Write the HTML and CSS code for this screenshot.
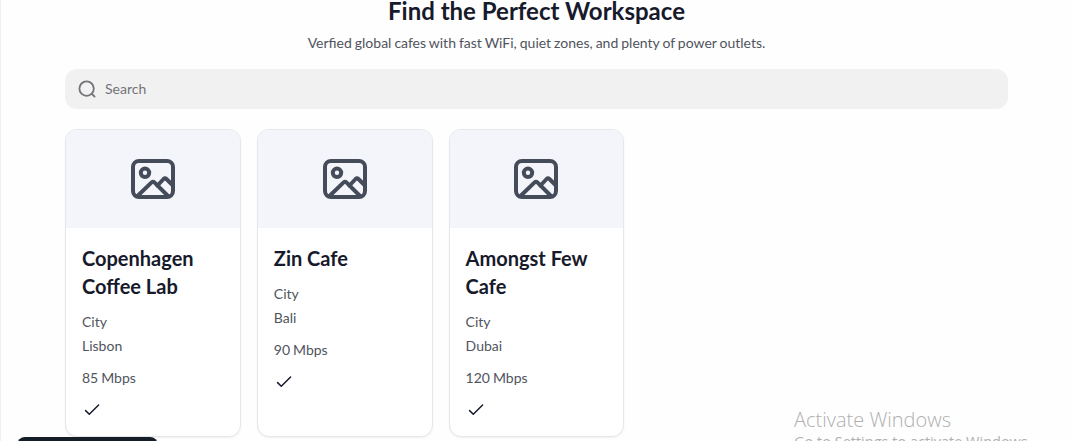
FILE: index.html
```
<!DOCTYPE html>
<html lang="en">

<head>
    <meta charset="UTF-8">
    <title>Find the Perfect Workspace</title>
    <link rel="stylesheet" href="styles.css">
</head>

<body>
    <svg class="sprite" width="0" height="0">
        <symbol id="image" viewBox="0 0 44 40">
            <rect x="2" y="2" width="40" height="36" rx="6" />
            <circle cx="14" cy="13.8" r="4.2" />
            <path d="M6.5 37 20.6 23.4Q22 22.2 23.4 23.4L37 37" />
            <path d="M26.5 26.5 32.6 20Q34 18.6 35.4 20L42 26.5" />
        </symbol>
        <symbol id="check" viewBox="0 0 20 20">
            <path d="M3.6 10.6 7.3 14.2 16.6 5" />
        </symbol>
    </svg>
    <main class="page">
        <h1 class="page-title">Find the Perfect Workspace</h1>
        <p class="page-subtitle">Verfied global cafes with fast WiFi, quiet zones, and plenty of power outlets.</p>
        <label class="search">
            <svg class="search-icon" viewBox="0 0 20 20">
                <circle cx="9.6" cy="9.6" r="7.2" />
                <path d="M15 15 17.6 17.6" />
            </svg>
            <input class="search-input" type="text" placeholder="Search">
        </label>
        <div class="cards">
            <article class="card">
                <div class="card-media">
                    <svg class="image-icon"><use href="#image" /></svg>
                </div>
                <div class="card-body">
                    <h2 class="card-title">Copenhagen Coffee Lab</h2>
                    <p class="card-text">City<br>Lisbon</p>
                    <p class="card-text">85 Mbps</p>
                    <svg class="check-icon"><use href="#check" /></svg>
                </div>
            </article>
            <article class="card">
                <div class="card-media">
                    <svg class="image-icon"><use href="#image" /></svg>
                </div>
                <div class="card-body">
                    <h2 class="card-title">Zin Cafe</h2>
                    <p class="card-text">City<br>Bali</p>
                    <p class="card-text">90 Mbps</p>
                    <svg class="check-icon"><use href="#check" /></svg>
                </div>
            </article>
            <article class="card">
                <div class="card-media">
                    <svg class="image-icon"><use href="#image" /></svg>
                </div>
                <div class="card-body">
                    <h2 class="card-title">Amongst Few Cafe</h2>
                    <p class="card-text">City<br>Dubai</p>
                    <p class="card-text">120 Mbps</p>
                    <svg class="check-icon"><use href="#check" /></svg>
                </div>
            </article>
        </div>
    </main>
    <div class="toast"></div>
    <div class="watermark">
        <div class="watermark-title">Activate Windows</div>
        <div class="watermark-text">Go to Settings to activate Windows.</div>
    </div>
</body>

</html>
```

FILE: styles.css
```
* {
    box-sizing: border-box;
}

body,
html {
    height: 100%;
    margin: 0;
    overflow: hidden;
}

body {
    font-family: Lato, sans-serif;
    background-color: #fefefe;
    color: #171a2b;
    border-left: 1px solid #f0f0f0;
}

h1,
h2,
p {
    margin: 0;
}

svg {
    display: block;
    fill: none;
    stroke: currentColor;
    stroke-linecap: round;
    stroke-linejoin: round;
}

.sprite {
    display: none;
}

.page {
    width: 943px;
    margin: -5px 0 0 64px;
}

.page-title {
    font-size: 24px;
    font-weight: 700;
    line-height: 32px;
    text-align: center;
}

.page-subtitle {
    margin-top: 4px;
    font-size: 14px;
    line-height: 24px;
    text-align: center;
    word-spacing: -0.6px;
    color: #50545d;
}

.search {
    display: flex;
    align-items: center;
    gap: 8px;
    height: 40px;
    margin-top: 14px;
    padding: 0 12px;
    border-radius: 12px;
    background-color: #f1f1f1;
    color: #737478;
}

.search-icon {
    width: 20px;
    height: 20px;
    stroke-width: 1.8;
}

.search-input {
    flex: 1;
    padding: 0;
    border: 0;
    outline: 0;
    background: none;
    font: 14px/20px Lato, sans-serif;
}

.search-input::placeholder {
    color: #737478;
}

.cards {
    display: grid;
    grid-template-columns: repeat(5, 1fr);
    gap: 16px;
    margin-top: 20px;
}

.card {
    min-height: 308px;
    border: 1px solid #e5e7eb;
    border-radius: 12px;
    overflow: hidden;
    background-color: #fff;
    box-shadow: 0 1px 2px rgba(0, 0, 0, 0.06);
}

.card-media {
    display: flex;
    align-items: center;
    justify-content: center;
    height: 98px;
    background-color: #f3f5fa;
    color: #444b59;
}

.image-icon {
    width: 44px;
    height: 40px;
    stroke-width: 4;
}

.card-body {
    display: flex;
    flex-direction: column;
    gap: 8px;
    padding: 16px;
}

.card-title {
    margin-bottom: 2px;
    font-size: 20px;
    font-weight: 700;
    line-height: 28px;
}

.card-text {
    font-size: 14px;
    line-height: 24px;
    word-spacing: -0.6px;
    color: #50545d;
}

.check-icon {
    width: 20px;
    height: 20px;
    margin-top: 2px;
    stroke-width: 1.5;
}

/* dark bar peeking in from the bottom edge */
.toast {
    position: absolute;
    left: 17px;
    top: 437px;
    width: 141px;
    height: 40px;
    border-radius: 8px;
    background-color: #151d27;
}

.watermark {
    position: absolute;
    left: 794px;
    top: 407px;
    font-family: "Open Sans", sans-serif;
    color: #b0b0b0;
    white-space: nowrap;
}

.watermark-title {
    font-size: 20px;
    font-weight: 300;
    line-height: 25px;
}

.watermark-text {
    font-size: 14.5px;
    line-height: 20px;
}
```
